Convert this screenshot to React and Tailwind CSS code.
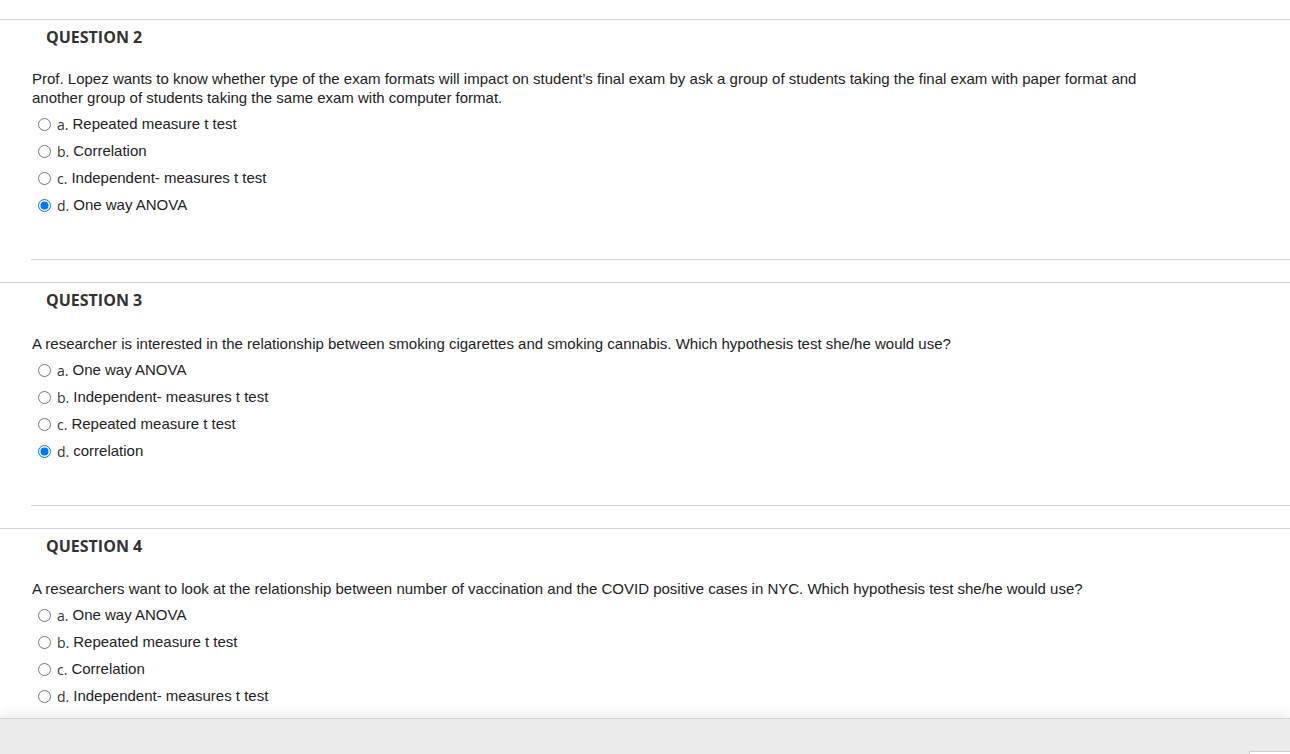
import React from "react";

const questions = [
  {
    num: 2,
    gap: "mt-[21px]",
    text: (
      <>
        Prof. Lopez wants to know whether type of the exam formats will impact on student’s final exam by ask a group of students taking the final exam with paper format and
        <br />
        another group of students taking the same exam with computer format.
      </>
    ),
    options: ["Repeated measure t test", "Correlation", "Independent- measures t test", "One way ANOVA"],
    checked: 3,
  },
  {
    num: 3,
    gap: "mt-[23px]",
    text: "A researcher is interested in the relationship between smoking cigarettes and smoking cannabis. Which hypothesis test she/he would use?",
    options: ["One way ANOVA", "Independent- measures t test", "Repeated measure t test", "correlation"],
    checked: 3,
  },
  {
    num: 4,
    gap: "mt-[22px]",
    text: "A researchers want to look at the relationship between number of vaccination and the COVID positive cases in NYC. Which hypothesis test she/he would use?",
    options: ["One way ANOVA", "Repeated measure t test", "Correlation", "Independent- measures t test"],
    checked: -1,
  },
];

const letters = ["a.", "b.", "c.", "d."];

function Radio({ checked }) {
  return (
    <span className="flex h-[13px] w-[13px] items-center justify-center">
      <svg width="13" height="13" viewBox="0 0 13 13">
        {checked ? (
          <>
            <circle cx="6.5" cy="6.5" r="6" fill="#fff" stroke="#0075ff" strokeWidth="1" />
            <circle cx="6.5" cy="6.5" r="4" fill="#0075ff" />
          </>
        ) : (
          <circle cx="6.5" cy="6.5" r="6" fill="#fff" stroke="#767676" strokeWidth="1" />
        )}
      </svg>
    </span>
  );
}

function Question({ q, last }) {
  return (
    <div className="border-t border-[#d4d4d4]">
      <div className="pt-[6px]">
        <h2
          className="ml-[46px] text-[16px] font-bold leading-[22px] text-[#333]"
          style={{ fontFamily: '"Open Sans", sans-serif' }}
        >
          QUESTION {q.num}
        </h2>
        <div className={`ml-[32px] ${q.gap} text-[15px] leading-[19px] text-[#222]`}>
          {q.text}
        </div>
        <div className="mt-[4px] flex flex-col">
          {q.options.map((o, i) => (
            <div key={i} className="flex h-[27px] items-center pl-[38px] text-[15px] text-[#222]">
              <Radio checked={i === q.checked} />
              <span
                className="ml-[6px] mr-[4px] text-[14px] leading-none text-[#333]"
                style={{ fontFamily: '"Open Sans", sans-serif' }}
              >
                {letters[i]}
              </span>
              <span>{o}</span>
            </div>
          ))}
        </div>
        {!last && (
          <div className="mt-[40px] ml-[31px] border-t border-[#d4d4d4] mb-[22px]" />
        )}
      </div>
    </div>
  );
}

export default function App() {
  return (
    <div
      className="flex h-[754px] w-full flex-col overflow-hidden bg-white"
      style={{ fontFamily: '"Liberation Sans", Arial, sans-serif' }}
    >
      <div className="flex-1 overflow-hidden pt-[19px]">
        {questions.map((q, i) => (
          <Question key={q.num} q={q} last={i === questions.length - 1} />
        ))}
      </div>
      <div className="relative h-[36px] shrink-0 border-t border-[#cfcfcf] bg-[#ececec] shadow-[0_-6px_10px_rgba(0,0,0,0.06)]">
        <div className="absolute left-[1249px] top-[32px] h-[10px] w-[60px] border border-[#d0d0d0] bg-white" />
      </div>
    </div>
  );
}
